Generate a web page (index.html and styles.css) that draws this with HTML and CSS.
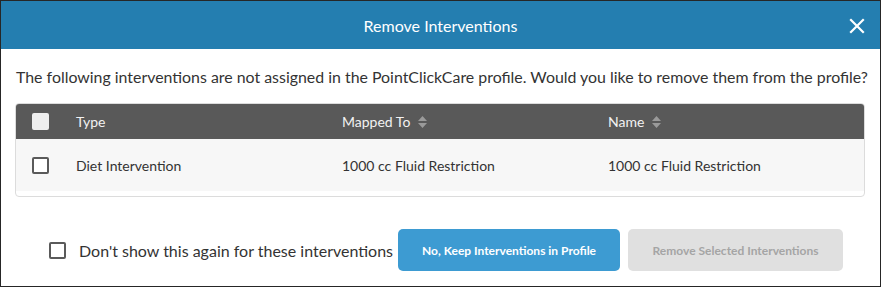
FILE: index.html
```html
<!DOCTYPE html>
<html>
<head>
<meta charset="utf-8">
<link rel="stylesheet" href="styles.css">
</head>
<body>
<div class="modal">
  <div class="modal-header">
    <span class="modal-title">Remove Interventions</span>
    <svg class="close" width="16" height="16" viewBox="0 0 16 16"><path d="M2 2 L14 14 M14 2 L2 14" stroke="#fff" stroke-width="2.2" stroke-linecap="square"/></svg>
  </div>
  <div class="modal-body">
    <p class="intro">The following interventions are not assigned in the PointClickCare profile. Would you like to remove them from the profile?</p>
    <div class="table">
      <div class="row head">
        <div class="cell check"><span class="cb cb-head"></span></div>
        <div class="cell">Type</div>
        <div class="cell">Mapped To <svg class="sort" width="9" height="12" viewBox="0 0 9 12"><path d="M4.5 0 L9 5 H0 Z M0 7 H9 L4.5 12 Z" fill="#9a9a9a"/></svg></div>
        <div class="cell">Name <svg class="sort" width="9" height="12" viewBox="0 0 9 12"><path d="M4.5 0 L9 5 H0 Z M0 7 H9 L4.5 12 Z" fill="#9a9a9a"/></svg></div>
      </div>
      <div class="row body-row">
        <div class="cell check"><span class="cb"></span></div>
        <div class="cell">Diet Intervention</div>
        <div class="cell">1000 cc Fluid Restriction</div>
        <div class="cell">1000 cc Fluid Restriction</div>
      </div>
    </div>
  </div>
  <div class="footer">
    <label class="dont"><span class="cb cb-foot"></span>Don't show this again for these interventions</label>
    <button class="btn primary">No, Keep Interventions in Profile</button>
    <button class="btn disabled">Remove Selected Interventions</button>
  </div>
</div>
</body>
</html>
```
FILE: styles.css
```css
* { box-sizing: border-box; }
html, body { margin: 0; padding: 0; background: #fff; }
body { font-family: Lato, "Open Sans", sans-serif; color: #333; }
.modal {
  width: 881px;
  height: 287px;
  border: 1px solid #262626;
  display: flex;
  flex-direction: column;
}
.modal-header {
  height: 48px;
  background: #247eb0;
  position: relative;
  display: flex;
  align-items: center;
  justify-content: center;
}
.modal-title { color: #fff; font-size: 16px; }
.close { position: absolute; right: 15px; top: 17px; }
.modal-body { padding: 0 15px 0 14px; }
.intro { margin: 18px 0 0 1px; font-size: 15.9px; line-height: 20px; color: #333; white-space: nowrap; }
.table {
  margin-top: 16px;
  border: 1px solid #dcdcdc;
  border-radius: 4px;
  overflow: hidden;
  padding-bottom: 5px;
}
.row { display: grid; grid-template-columns: 60px 266px 266px 1fr; align-items: center; }
.head { background: #595959; height: 35px; color: #f2f2f2; font-size: 14px; }
.body-row { background: #f7f7f7; height: 52px; font-size: 14px; color: #333; }
.cell { display: flex; align-items: center; gap: 6px; }
.check { padding-left: 16px; }
.cb { display: inline-block; width: 17px; height: 17px; border: 2px solid #5a5a5a; border-radius: 2px; background: #fff; }
.cb-head { background: #eeeeee; border-color: #eeeeee; }
.sort { margin-left: 2px; }
.footer {
  display: flex;
  align-items: center;
  padding: 32px 0 0 48px;
}
.dont { display: flex; align-items: center; font-size: 16px; color: #333; margin-right: 5px; }
.cb-foot { margin-right: 13px; }
.btn {
  height: 42px;
  border: none;
  border-radius: 5px;
  font-family: Lato, sans-serif;
  font-weight: 700;
  font-size: 12px;
  padding: 0;
}
.primary { width: 222px; background: #3d9bd2; color: #fff; margin-right: 8px; }
.disabled { width: 215px; background: #e0e0e0; color: #a5a5a5; }
```
